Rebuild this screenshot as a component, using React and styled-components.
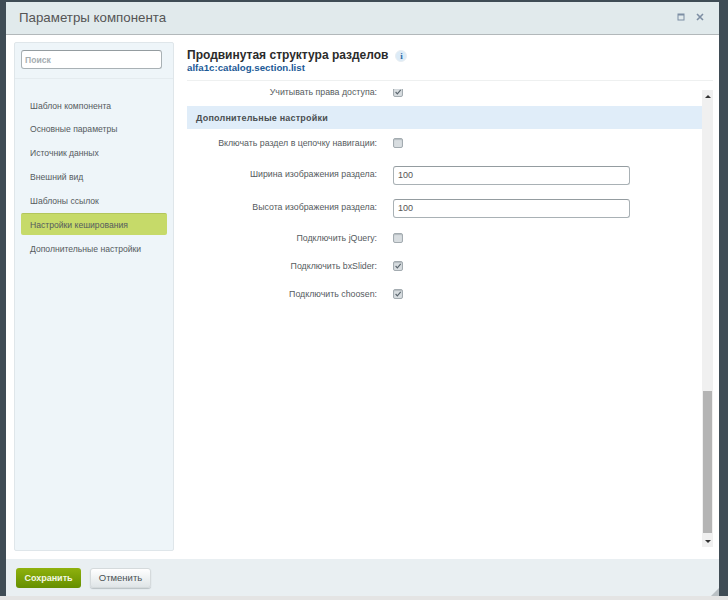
import styled, { createGlobalStyle } from "styled-components";

const GlobalStyle = createGlobalStyle`
    html, body {
        margin: 0;
        padding: 0;
        background: #3f4c55;
    }
    * {
        box-sizing: border-box;
    }
`

const menuItems = [
    "Шаблон компонента",
    "Основные параметры",
    "Источник данных",
    "Внешний вид",
    "Шаблоны ссылок",
    "Настройки кеширования",
    "Дополнительные настройки",
]

export default function App() {
    return (
        <Page>
            <GlobalStyle />
            <Dialog>
                <Header>
                    <Title>Параметры компонента</Title>
                    <HeaderIcons>
                        <svg width="8" height="8" viewBox="0 0 8 8">
                            <rect x="1" y="1" width="6" height="6" fill="none" stroke="#7d8ea3" strokeWidth="1" />
                            <rect x="1" y="1" width="6" height="1.5" fill="#7d8ea3" />
                        </svg>
                        <svg width="8" height="8" viewBox="0 0 8 8">
                            <path d="M1 1 L7 7 M7 1 L1 7" stroke="#7d8ea3" strokeWidth="1.6" />
                        </svg>
                    </HeaderIcons>
                </Header>
                <Body>
                    <Sidebar>
                        <SearchBox>
                            <SearchInput placeholder="Поиск" />
                        </SearchBox>
                        <Menu>
                            {menuItems.map(el =>
                                <MenuItem key={el} $active={el === "Настройки кеширования"}>{el}</MenuItem>
                            )}
                        </Menu>
                    </Sidebar>
                    <Main>
                        <MainHead>
                            <HeadTitle>
                                Продвинутая структура разделов
                                <InfoIcon>i</InfoIcon>
                            </HeadTitle>
                            <HeadCode>alfa1c:catalog.section.list</HeadCode>
                        </MainHead>
                        <ScrollArea>
                            <Content>
                                <ClippedRow>
                                    <Label>Учитывать права доступа:</Label>
                                    <Check $checked><CheckMark /></Check>
                                </ClippedRow>
                                <Band>Дополнительные настройки</Band>
                                <Row>
                                    <Label>Включать раздел в цепочку навигации:</Label>
                                    <Check />
                                </Row>
                                <InputGroup>
                                    <InputRow>
                                        <Label>Ширина изображения раздела:</Label>
                                        <TextInput defaultValue="100" />
                                    </InputRow>
                                    <InputRow>
                                        <Label>Высота изображения раздела:</Label>
                                        <TextInput defaultValue="100" />
                                    </InputRow>
                                </InputGroup>
                                <Row>
                                    <Label>Подключить jQuery:</Label>
                                    <Check />
                                </Row>
                                <Row>
                                    <Label>Подключить bxSlider:</Label>
                                    <Check $checked><CheckMark /></Check>
                                </Row>
                                <Row>
                                    <Label>Подключить choosen:</Label>
                                    <Check $checked><CheckMark /></Check>
                                </Row>
                            </Content>
                            <Scrollbar>
                                <Arrow $up />
                                <Track>
                                    <Thumb />
                                </Track>
                                <Arrow />
                            </Scrollbar>
                        </ScrollArea>
                    </Main>
                </Body>
                <Footer>
                    <SaveButton>Сохранить</SaveButton>
                    <CancelButton>Отменить</CancelButton>
                    <Grip viewBox="0 0 8 8" width="8" height="8">
                        <path d="M8 0 L8 8 L0 8 Z" fill="#b9c0c4" />
                    </Grip>
                </Footer>
            </Dialog>
            <BottomStrip />
        </Page>
    )
}

function CheckMark() {
    return (
        <svg width="10" height="10" viewBox="0 0 10 10">
            <path d="M2 5 L4.2 7.4 L8.4 2.4" fill="none" stroke="#5b666e" strokeWidth="1.4" />
        </svg>
    )
}

const Page = styled.div`
    width: 728px;
    height: 600px;
    padding: 2px 9px 0 6px;
    overflow: hidden;
    background: #3f4c55;
    font-family: "Liberation Sans", Arial, sans-serif;
`

const Dialog = styled.div`
    display: flex;
    flex-direction: column;
    width: 713px;
    height: 594px;
    background: #fff;
`

const Header = styled.div`
    display: flex;
    align-items: center;
    justify-content: space-between;
    height: 33px;
    padding: 0 15px 2px 13px;
    background: #e1eaec;
    border-bottom: 1px solid #b2b8ba;
`

const Title = styled.div`
    font-size: 13.3px;
    color: #555;
`

const HeaderIcons = styled.div`
    display: flex;
    align-items: center;
    gap: 11px;
`

const Body = styled.div`
    flex: 1;
    display: flex;
    min-height: 0;
    padding: 7px 6px 8px 8px;
    background: #fff;
`

const Sidebar = styled.div`
    width: 160px;
    flex-shrink: 0;
    background: #eef5f9;
    border: 1px solid #dfe6ea;
    border-radius: 2px;
    padding: 0 6px;
`

const SearchBox = styled.div`
    height: 36px;
    padding: 7px 12px 0 6px;
    margin: 0 -6px;
    border-bottom: 1px solid #e4ebef;
`

const SearchInput = styled.input`
    display: block;
    width: 141px;
    height: 19px;
    padding: 0 3px;
    border: 1px solid #a9b1b5;
    border-top-color: #949ca0;
    border-radius: 3px;
    background: #fff;
    outline: none;
    font-family: inherit;
    font-size: 8.6px;
    font-weight: bold;
    &::placeholder {
        color: #a6adb1;
        opacity: 1;
    }
`

const Menu = styled.div`
    display: flex;
    flex-direction: column;
    gap: 1.85px;
    padding-top: 15px;
`

const MenuItem = styled.div`
    display: flex;
    align-items: center;
    height: 22px;
    width: 146px;
    padding-left: 9px;
    font-size: 8.6px;
    color: #555b5e;
    border-radius: 2px;
    background: ${props => props.$active ? "#c6da69" : "transparent"};
    border-top: 1px solid ${props => props.$active ? "#b3c65c" : "transparent"};
`

const Main = styled.div`
    flex: 1;
    display: flex;
    flex-direction: column;
    min-width: 0;
    margin-left: 13px;
`

const MainHead = styled.div`
    height: 39px;
    padding-top: 6px;
    border-bottom: 1px solid #eef0f0;
`

const HeadTitle = styled.div`
    display: flex;
    align-items: center;
    font-size: 12px;
    line-height: 14px;
    font-weight: bold;
    color: #2b2b2b;
`

const InfoIcon = styled.span`
    display: flex;
    align-items: center;
    justify-content: center;
    width: 12px;
    height: 12px;
    margin: 2px 0 0 7px;
    border-radius: 50%;
    background: #dcebf7;
    border: 1px solid #e9eef2;
    font-family: "Liberation Serif", serif;
    font-size: 9px;
    color: #2c6aa5;
`

const HeadCode = styled.div`
    font-size: 9.7px;
    line-height: 12px;
    font-weight: bold;
    color: #1c5a96;
`

const ScrollArea = styled.div`
    flex: 1;
    display: flex;
    min-height: 0;
    overflow: hidden;
`

const Content = styled.div`
    flex: 1;
    min-width: 0;
    margin-top: 8px;
    overflow: hidden;
`

const Row = styled.div`
    display: grid;
    grid-template-columns: 190px 1fr;
    column-gap: 16px;
    align-items: center;
    height: 28px;
`

const ClippedRow = styled(Row)`
    margin-top: -11px;
`

const InputGroup = styled.div`
    margin-bottom: 1px;
`

const InputRow = styled(Row)`
    height: 33px;
`

const Label = styled.div`
    text-align: right;
    font-size: 8.8px;
    color: #555b5e;
    white-space: nowrap;
`

const Check = styled.div`
    display: flex;
    align-items: center;
    justify-content: center;
    width: 10px;
    height: 10px;
    border: 1px solid #a3abb0;
    border-radius: 2px;
    background: #d8dde0;
    box-shadow: inset 0 1px 1px #b4bbbf;
`

const TextInput = styled.input`
    display: block;
    width: 237px;
    height: 19px;
    margin-top: 3px;
    padding: 0 4px;
    border: 1px solid #a9b1b5;
    border-top-color: #949ca0;
    border-radius: 3px;
    background: #fff;
    outline: none;
    font-family: inherit;
    font-size: 9px;
    color: #555;
`

const Band = styled.div`
    display: flex;
    align-items: center;
    height: 23px;
    padding-left: 9px;
    background: #e0edf9;
    font-size: 9px;
    font-weight: bold;
    letter-spacing: 0.2px;
    color: #4a4f52;
`

const Scrollbar = styled.div`
    display: flex;
    flex-direction: column;
    width: 11px;
    margin: 9px 0 4px;
    background: #f0f0f0;
`

const Arrow = styled.div`
    flex-shrink: 0;
    height: 12px;
    display: flex;
    align-items: center;
    justify-content: center;
    &::after {
        content: "";
        width: 0;
        height: 0;
        border-left: 3px solid transparent;
        border-right: 3px solid transparent;
        ${props => props.$up ? "border-bottom: 3px solid #333;" : "border-top: 3px solid #333;"}
    }
`

const Track = styled.div`
    flex: 1;
    display: flex;
    flex-direction: column;
    justify-content: flex-end;
`

const Thumb = styled.div`
    height: 142px;
    margin: 0 1px 2px;
    background: #b4b4b4;
`

const Footer = styled.div`
    position: relative;
    display: flex;
    align-items: center;
    gap: 9px;
    height: 37px;
    padding: 0 0 0 10px;
    background: #e9eff2;
`

const SaveButton = styled.button`
    width: 65px;
    height: 20px;
    padding: 0;
    border: none;
    border-radius: 3px;
    background: linear-gradient(#8fb10d, #658f00);
    font-family: inherit;
    font-size: 9px;
    font-weight: bold;
    color: #f4f8e4;
`

const CancelButton = styled.button`
    width: 61px;
    height: 20px;
    padding: 0;
    border: 1px solid #d5dadc;
    border-radius: 3px;
    background: linear-gradient(#ffffff, #dfe5e7);
    font-family: inherit;
    font-size: 9.5px;
    color: #4a5255;
    box-shadow: 0 1px 1px #b9c0c4;
`

const Grip = styled.svg`
    position: absolute;
    right: 0;
    bottom: 0;
`

const BottomStrip = styled.div`
    height: 4px;
    background: #e4e4e4;
    margin: 0 -9px 0 -6px;
`
